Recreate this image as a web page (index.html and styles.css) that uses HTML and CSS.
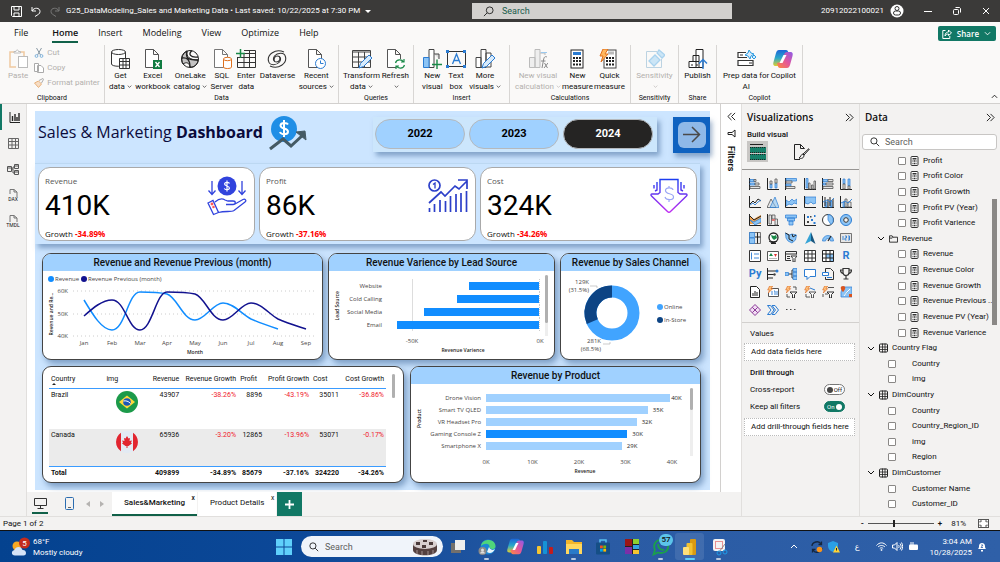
FILE: index.html
```html
<!doctype html>
<html lang="en">
<head>
    <meta charset="UTF-8">
    <meta name="viewport" content="width=device-width, initial-scale=1">
    <title>G25_DataModeling_Sales and Marketing Data</title>
    <link rel="stylesheet" href="styles.css">
</head>
<body>

<!-- shared icons -->
<svg class="sprite" width="0" height="0" aria-hidden="true">
    <symbol id="i-down" viewBox="0 0 8 5"><path d="M1 1l3 3 3-3" fill="none" stroke="currentColor"/></symbol>
    <symbol id="i-dbl" viewBox="0 0 10 10"><path d="M1 1l4 4-4 4M5 1l4 4-4 4" fill="none" stroke="currentColor"/></symbol>
    <symbol id="i-glass" viewBox="0 0 12 12"><circle cx="7.300" cy="4.700" r="3.700" fill="none" stroke="currentColor"/><path d="M4.500 7.500L1 11" fill="none" stroke="currentColor"/></symbol>
    <symbol id="i-calc" viewBox="0 0 8 10"><rect x=".5" y=".5" width="7" height="9" rx="1" fill="#fff" stroke="#333"/><rect x="2" y="2" width="4" height="1.500" fill="#333"/><path d="M2 5h4M2 7.500h4" stroke="#333" stroke-width="1.400" stroke-dasharray="1 .5"/></symbol>
    <symbol id="i-table" viewBox="0 0 9 9"><rect x=".5" y=".5" width="8" height="8" rx="1" fill="none" stroke="#222"/><path d="M0 3.500h9M0 6h9M3.500 0v9M6 0v9" stroke="#222" stroke-width=".8"/></symbol>
    <symbol id="i-folder" viewBox="0 0 10 8"><path d="M.5 7.500v-7h3l1 1.500h5v5.500zM.5 3h3l1-1" fill="none" stroke="#222"/></symbol>
    <symbol id="i-bolt" viewBox="0 0 8 8"><path d="M3 0h3.500L4.500 3h2L1.500 8l1.300-3.500H.8z" fill="#ffc27a" stroke="#d9661f" stroke-width=".7"/></symbol>
    <symbol id="i-copilot" viewBox="0 0 20 20">
        <path d="M6 1h7c1.500 0 2 1 2.500 3L16 6l-4 1-3 7c-.5 2-1.500 3-3 3H3c-3 0-3-2-2.500-4l2.500-9c.6-2 1.500-3 3-3z" fill="url(#cpA)"/>
        <path d="M14 19H7c-1.500 0-2-1-2.500-3L4 14l4-1 3-7c.5-2 1.500-3 3-3h3c3 0 3 2 2.500 4L17 16c-.6 2-1.500 3-3 3z" fill="url(#cpB)"/>
        <path d="M10.500 6h3L9.500 14h-3z" fill="#fff"/>
    </symbol>
    <linearGradient id="cpA" x1="0" y1="0" x2="0" y2="1"><stop offset="0" stop-color="#1c66d8"/><stop offset=".5" stop-color="#2aa8c9"/><stop offset="1" stop-color="#e0cf2f"/></linearGradient>
    <linearGradient id="cpB" x1="1" y1="0" x2="0" y2="1"><stop offset="0" stop-color="#8c5be8"/><stop offset=".5" stop-color="#e4569b"/><stop offset="1" stop-color="#ff8a3c"/></linearGradient>
    <linearGradient id="arrowG" x1="0" y1="0" x2="0" y2="1"><stop offset="0" stop-color="#1c3df0"/><stop offset="1" stop-color="#c02cf0"/></linearGradient>
</svg>

<header class="titlebar">
    <div class="title-left">
        <svg width="11" height="11" viewBox="0 0 11 11" fill="none" stroke="#fff"><path d="M.5.5h10v10h-9l-1-1zM3 .5v3.500h5V.5M3 10.500V7h5v3.500"/></svg>
        <svg width="10" height="11" viewBox="0 0 10 11" fill="none" stroke="#fff"><path d="M1 1v4h4M1 5c2-4 8-3.500 8 .5C9 8 7 8.500 4 10.500"/></svg>
        <svg width="10" height="11" viewBox="0 0 10 11" fill="none" stroke="#777"><path d="M9 1v4H5M9 5C7 1 1 1.500 1 5.500 1 8 3 8.500 6 10.500"/></svg>
        <span class="doc-name">G25_DataModeling_Sales and Marketing Data • Last saved: 10/22/2025 at 7:30 PM</span>
        <span class="caret"></span>
    </div>
    <label class="title-search">
        <svg width="11" height="11"><use href="#i-glass"/></svg>
        <input type="text" placeholder="Search" aria-label="Search">
    </label>
    <div class="title-right">
        <span class="account">20912022100021</span>
        <svg width="14" height="14" viewBox="0 0 14 14"><circle cx="7" cy="7" r="6.500" fill="#fff"/><circle cx="7" cy="4.500" r="2" fill="none" stroke="#333"/><rect x="3.500" y="7" width="7" height="4" rx="2" fill="none" stroke="#333"/></svg>
        <button class="win" aria-label="Minimize"><svg width="8" height="8" viewBox="0 0 8 8"><path d="M0 4.500h8" stroke="#fff"/></svg></button>
        <button class="win" aria-label="Restore"><svg width="8" height="8" viewBox="0 0 8 8" fill="none" stroke="#fff"><rect x=".5" y="2.500" width="5" height="5" rx="1"/><path d="M2.500.5h4l1 1v4"/></svg></button>
        <button class="win" aria-label="Close"><svg width="8" height="8" viewBox="0 0 8 8"><path d="M1 1l6 6M7 1L1 7" stroke="#fff"/></svg></button>
    </div>
</header>

<nav class="menu">
    <a href="#" class="file">File</a>
    <a href="#" class="active">Home</a>
    <a href="#">Insert</a>
    <a href="#">Modeling</a>
    <a href="#">View</a>
    <a href="#">Optimize</a>
    <a href="#">Help</a>
    <button class="share">
        <svg width="10" height="10" viewBox="0 0 10 10" fill="none" stroke="#fff"><path d="M3.500 1.500H.8v8h7V7M3 7c0-3 2-4 3.500-4V1L9.500 4l-3 2.500V5C5 5 4 5.500 3 7z"/></svg>
        Share
        <svg width="7" height="5"><use href="#i-down"/></svg>
    </button>
</nav>

<section class="ribbon">
    <div class="group g-clip">
        <div class="tools">
            <button class="tool off"><svg width="20" height="20" viewBox="0 0 20 20" fill="none"><path d="M8 18H2V3h14v4" stroke="#f0c9a0" stroke-width="1.500"/><path d="M6 4V2.500h2c0-2 2.500-2 2.500 0h2V4z" fill="#fff" stroke="#bbb"/><rect x="10.500" y="7.500" width="9" height="11" fill="#fff" stroke="#bbb"/></svg>Paste</button>
            <div class="clip-list">
                <button><svg width="10" height="10" viewBox="0 0 10 10" fill="none" stroke="#8a9aa5"><path d="M2.500 0l4 7M7.500 0l-4 7"/><circle cx="2.500" cy="8" r="1.400" stroke="#7fb2dc"/><circle cx="7.500" cy="8" r="1.400" stroke="#7fb2dc"/></svg>Cut</button>
                <button><svg width="10" height="10" viewBox="0 0 10 10" fill="#fff" stroke="#aaa"><path d="M.5.5h4v8h-4zM3.500 2.500h3.500l2.500 2.500v4.500h-6z"/></svg>Copy</button>
                <button><svg width="10" height="10" viewBox="0 0 10 10" fill="none"><path d="M.5 5l4-2 3 3-3 3.500z" fill="#f7ddc4" stroke="#e8b27c"/><path d="M5 2.500L9 .5l.5 1L7.500 5" stroke="#aaa"/></svg>Format painter</button>
            </div>
        </div>
        <h2>Clipboard</h2>
    </div>
    <div class="group g-data">
        <div class="tools">
            <button class="tool"><svg width="20" height="20" viewBox="0 0 20 20" fill="#fff" stroke="#333"><path d="M1.500 3v12c0 3 14 3 14 0V3"/><ellipse cx="8.500" cy="3" rx="7" ry="2.500"/><path d="M9.500 9.500h10v10h-10zM9.500 12.500h10M9.500 16h10M13 9.500v10M16 9.500v10"/></svg>Get<br>data<svg class="dd"><use href="#i-down"/></svg></button>
            <button class="tool"><svg width="20" height="20" viewBox="0 0 20 20" fill="#fff" stroke="#555"><path d="M2.500.5h8l5 5v13h-13zM10.500.5v5h5"/><path d="M10 11h9v9h-9z" fill="#107c41" stroke="none"/><path d="M12.500 13l4 5M16.500 13l-4 5" stroke="#fff" stroke-width="1.300"/></svg>Excel<br>workbook</button>
            <button class="tool"><svg width="20" height="20" viewBox="0 0 20 20" fill="none" stroke="#222"><circle cx="10" cy="10" r="8.500"/><path d="M7 2c-2 8 2 9 11 9M2 9c5-1 8 2 8 9M12 1.500C8 5 10 9 18 8" stroke-width="1.300"/><path d="M7 2C1 5 1 12 3 15c3-2 6-2 7 3 4 1 8-3 8-7-8 0-12-3-11-9z" fill="#222" fill-opacity=".25"/></svg>OneLake<br>catalog<svg class="dd"><use href="#i-down"/></svg></button>
            <button class="tool"><svg width="20" height="20" viewBox="0 0 20 20" fill="#fff" stroke="#777"><path d="M2.500.5h8l5 5v13h-13zM10.500.5v5h5"/><g stroke="#e0701c"><path d="M11.500 10v8c0 2 8 2 8 0v-8"/><ellipse cx="15.500" cy="10" rx="4" ry="1.700"/></g></svg>SQL<br>Server</button>
            <button class="tool"><svg width="20" height="20" viewBox="0 0 20 20" fill="none" stroke="#333"><path d="M8 1.500h11.500v17H1.500V8M1.500 8.500h18M1.500 13.500h18M8 5v13.500M13.500 1.500v17M8 4.500h11"/><path d="M0 4.500h9M4.500 0v9" stroke="#1a8a48" stroke-width="1.500"/></svg>Enter<br>data</button>
            <button class="tool"><svg width="20" height="20" viewBox="0 0 20 20" fill="none" stroke="#333" stroke-width="1.100"><path d="M17 3C8-1 0 6 1.500 12c1 5 8 4.500 11 1 2-3 1-6-2-6s-4 3-3 5"/><path d="M3 17c9 4 17-3 15.500-9-1-5-8-4.500-11-1-2 3-1 6 2 6s4-3 3-5"/></svg>Dataverse</button>
            <button class="tool"><svg width="20" height="20" viewBox="0 0 20 20" fill="#fff" stroke="#555"><path d="M2.500.5h8l5 5v13h-13zM10.500.5v5h5"/><circle cx="14.500" cy="14.500" r="5" stroke="#2b7cd3"/><path d="M14.500 11.500v3h3" stroke="#2b7cd3"/></svg>Recent<br>sources<svg class="dd"><use href="#i-down"/></svg></button>
        </div>
        <h2>Data</h2>
    </div>
    <div class="group g-query">
        <div class="tools">
            <button class="tool"><svg width="20" height="20" viewBox="0 0 20 20" fill="none" stroke="#444"><path d="M.5 1.500h18v17H.5zM.5 3h18M.5 8h18M.5 13h18M6.500 3v15M12.500 3v15"/><path d="M7 19l1.500-4.500L17 6l3 3-8.500 8.500z" fill="#d8ebfb" stroke="#2b7cd3"/></svg>Transform<br>data<svg class="dd"><use href="#i-down"/></svg></button>
            <button class="tool"><svg width="20" height="20" viewBox="0 0 20 20" fill="#fff" stroke="#555"><path d="M2.500.5h8l5 5v13h-13zM10.500.5v5h5"/><circle cx="15" cy="15" r="5" stroke="none"/><path d="M10.500 14c1-4 6.500-4 8-1M19 10v3h-3M19.500 16c-1 4-6.500 4-8 1M11 20v-3h3" fill="none" stroke="#1a8a48" stroke-width="1.200"/></svg>Refresh<br><svg class="dd"><use href="#i-down"/></svg></button>
        </div>
        <h2>Queries</h2>
    </div>
    <div class="group g-insert">
        <div class="tools">
            <button class="tool"><svg width="20" height="20" viewBox="0 0 20 20" fill="#fff" stroke="#444"><path d="M7 .5h5v18H7z"/><path d="M1.500 8.500H7v10H1.500z" fill="#8cc4f5" stroke="#2b7cd3"/><path d="M12 5h5v5" fill="#ddd"/><path d="M10 15.500h10M15 10.500v10" stroke="#1a8a48" stroke-width="1.400"/></svg>New<br>visual</button>
            <button class="tool"><svg width="20" height="20" viewBox="0 0 20 20" fill="none"><path d="M1.500 2.500h18v15h-18z" stroke="#333"/><path d="M0 1h3v3H0zM17 1h3v3h-3zM0 16h3v3H0zM17 16h3v3h-3z" fill="#2b7cd3"/><path d="M6.500 15l4-10 4 10M8 11.500h5" stroke="#2b7cd3" stroke-width="1.300"/></svg>Text<br>box</button>
            <button class="tool"><svg width="20" height="20" viewBox="0 0 20 20" fill="#fff" stroke="#444"><path d="M6 .5h5v18H6zM1 8.500h5v10H1zM11 4h5v14h-5z"/><path d="M7 19l1.500-4.500L17 6l3 3-8.500 8.500z" fill="#d8ebfb" stroke="#2b7cd3"/></svg>More<br>visuals<svg class="dd"><use href="#i-down"/></svg></button>
        </div>
        <h2>Insert</h2>
    </div>
    <div class="group g-calc">
        <div class="tools">
            <button class="tool off"><svg width="20" height="20" viewBox="0 0 20 20" fill="#eee" stroke="#bbb"><path d="M7 .5h5v18H7zM1.500 8.500H7v10H1.500zM12 4h5v2"/><path d="M19 8c-2-1-3 0-3.500 3L14 19M13 12h4.500M16.500 14l3 5M20 14l-4 5" fill="none" stroke="#888"/><path d="M13 3.500h6" stroke="#9bc9ee"/></svg>New visual<br>calculation<svg class="dd"><use href="#i-down"/></svg></button>
            <button class="tool"><svg width="20" height="20" viewBox="0 0 20 20"><rect x="4" y="1" width="12" height="18" fill="#fff" stroke="#222"/><rect x="6" y="3" width="8" height="3" fill="#2b7cd3"/><path d="M6 9h8M6 12h8M6 15.500h8" stroke="#222" stroke-width="1.800" stroke-dasharray="2 1"/></svg>New<br>measure</button>
            <button class="tool"><svg width="20" height="20" viewBox="0 0 20 20"><rect x="5" y="1" width="12" height="18" fill="#fff" stroke="#444"/><path d="M9 4h6" stroke="#bbb" stroke-width="3"/><path d="M7 9h8M7 12h8M7 15.500h8" stroke="#222" stroke-width="1.800" stroke-dasharray="2 1"/><path d="M4 0h5L6 5h3l-7 8 2-6H1z" fill="#ffb75e" stroke="#e0701c"/></svg>Quick<br>measure</button>
        </div>
        <h2>Calculations</h2>
    </div>
    <div class="group g-sens">
        <div class="tools">
            <button class="tool off"><svg width="20" height="20" viewBox="0 0 20 20" fill="none" stroke="#a9d2ee"><path d="M12 2.500H1.500v16h15V10" stroke="#bcd3e2"/><path d="M4 12l6-6 5 5-6 6zM12 4l2-3 6 5-3 3z" fill="#cbe5f6" stroke-width="1.300"/></svg>Sensitivity<br><svg class="dd"><use href="#i-down"/></svg></button>
        </div>
        <h2>Sensitivity</h2>
    </div>
    <div class="group g-share">
        <div class="tools">
            <button class="tool"><svg width="20" height="20" viewBox="0 0 20 20" fill="#fff" stroke="#222"><path d="M8 .5h7v18H8zM5 6.500h6v6H5zM1 12.500h10v6H1zM3 16h2M8 16h2"/><path d="M15 20v-9M11 14.500l4-4 4 4" fill="none" stroke="#2b7cd3" stroke-width="1.400"/></svg>Publish</button>
        </div>
        <h2>Share</h2>
    </div>
    <div class="group g-copilot">
        <div class="tools">
            <button class="tool"><svg width="20" height="20" viewBox="0 0 20 20" fill="#fff" stroke="#333" stroke-width="1.200"><path d="M10 3.500H2v5h9M2 11.500h15v5H2z"/><path d="M4 6h3M13 14h3"/><path d="M13 1l2 3 3 1-3 2-1 3-2-3-3-1 3-2zM18 6l2 2-2 2-2-2z" fill="#d8ebfb" stroke="#2b9be0" stroke-width="1"/></svg>Prep data for<br>AI</button>
            <button class="tool"><svg width="20" height="20"><use href="#i-copilot"/></svg>Copilot</button>
        </div>
        <h2>Copilot</h2>
    </div>
    <button class="collapse" aria-label="Collapse ribbon"><svg width="7" height="5"><use href="#i-down"/></svg></button>
</section>

<main class="work">
    <nav class="rail">
        <button class="active" aria-label="Report view"><svg width="11" height="11" viewBox="0 0 11 11"><path d="M1 0v10.500h10" fill="none" stroke="#222"/><path d="M3.500 4v5M6 2v7M8 5v4M10 1v8" stroke="#222" stroke-width="1.400"/></svg></button>
        <button aria-label="Table view"><svg width="11" height="11" viewBox="0 0 11 11" fill="none" stroke="#666"><path d="M.5.500h10v10H.5zM.5 3.500h10M.5 7h10M4 .5v10M7.500.5v10"/></svg></button>
        <button aria-label="Model view"><svg width="12" height="11" viewBox="0 0 12 11" fill="none" stroke="#555"><path d="M.5 2.500h4v5h-4zM7.500.500h4v4h-4zM7.500 6.500h4v4h-4zM.5 4h4M7.500 2h4M7.500 8h4M4.500 5h1.500v4h1.500M6 5V3h1.500"/></svg></button>
        <button aria-label="DAX query view"><svg width="12" height="8" viewBox="0 0 12 8" fill="none" stroke="#777"><path d="M3 5V.5h4L10 3v5M7 .5V3h3"/></svg><small>DAX</small></button>
        <button aria-label="TMDL view"><svg width="12" height="8" viewBox="0 0 12 8" fill="none" stroke="#777"><path d="M3 7V.5h4L10 3v4M7 .5V3h3"/></svg><small>TMDL</small></button>
    </nav>

    <div class="center">
        <div class="stage">
            <div class="canvas">
                <div class="page">
                    <div class="page-head">
                        <h1>Sales &amp; Marketing <b>Dashboard</b></h1>
                        <svg class="logo" width="38" height="37" viewBox="0 0 38 37">
                            <circle cx="15" cy="14" r="13" fill="#1f8ee6"/>
                            <path d="M19 9.500c-1-2-7-2.500-7.500.8-.3 3.800 7.700 2.700 7.500 6.500-.3 3.300-7 3-8 .2M15 5v17" fill="none" stroke="#fff" stroke-width="2"/>
                            <path d="M1 34l13-10 8 7L34 20" fill="none" stroke="#455a64" stroke-width="3"/>
                            <path d="M27 17l9-1 1 9z" fill="#455a64" stroke="#455a64"/>
                        </svg>
                        <div class="years">
                            <button>2022</button>
                            <button>2023</button>
                            <button class="on">2024</button>
                        </div>
                        <button class="next" aria-label="Next page"><span><svg width="18" height="17" viewBox="0 0 18 17" fill="none" stroke="#4a4a4a" stroke-width="1.500"><path d="M0 8.500h16M9 1l7.500 7.500L9 16"/></svg></span></button>
                    </div>

                    <div class="cards">
                        <article class="card">
                            <div>
                                <h3>Revenue</h3>
                                <p class="big">410K</p>
                                <p class="growth">Growth <b>-34.89%</b></p>
                            </div>
                            <svg width="40" height="40" viewBox="0 0 40 40" fill="none" stroke="#3143dd" stroke-width="1.300">
                                <circle cx="20" cy="10" r="9.500" fill="#3143dd" stroke="none"/>
                                <path d="M22.500 7.500c-.5-1.500-4.500-1.500-5 .3-.3 2.500 5 1.900 5 4.400-.3 2-4.500 2-5.200.2M20 4.500v11" stroke="#fff" stroke-width="1.200"/>
                                <path d="M5 5v13M1.500 14.500L5 18.500l3.500-4M35 5v13M31.500 14.500l3.500 4 3.500-4"/>
                                <path d="M1 27l5-2.500 5.500 12-5 2zM8 26c4-3.500 7-4 10-2l3 1h5c3 0 3 3.500 0 3.500h-7M28 28l8-4.500c2-1 4 1 2 2.500l-11 8.500c-3 2-9 0-15.500 2"/>
                                <circle cx="5" cy="28" r=".8" stroke="#f55"/><circle cx="6.500" cy="31" r=".6" stroke="#f55"/>
                            </svg>
                        </article>
                        <article class="card">
                            <div>
                                <h3>Profit</h3>
                                <p class="big">86K</p>
                                <p class="growth">Growth <b>-37.16%</b></p>
                            </div>
                            <svg width="40" height="40" viewBox="0 0 40 40" fill="none" stroke="#2c3fc9" stroke-width="1.700">
                                <circle cx="6.500" cy="9.500" r="5.500"/><path d="M5 8.500l2-1.500v5.500" stroke-width="1.300"/>
                                <path d="M1 27l12-11 4 4 10-10 4 3 8-8M30 4h9v9"/>
                                <path d="M1.500 36v-4M6.500 36v-8M12 36V24M17.500 36V25M22.500 36V20M28 36V18M33 36V17M38.500 36V15"/>
                            </svg>
                        </article>
                        <article class="card">
                            <div>
                                <h3>Cost</h3>
                                <p class="big">324K</p>
                                <p class="growth">Growth <b>-34.26%</b></p>
                            </div>
                            <svg width="40" height="40" viewBox="0 0 40 40" fill="none" stroke="url(#arrowG)" stroke-width="1.400">
                                <path d="M11 3.500h18v13l2 1.500h6c1 0 1.500 1 .5 2L21.500 35.500c-1 1-2 1-3 0L2.500 20c-1-1-.5-2 .5-2h6l2-1.500zM8 6v8l-2 1M5 9v3.500M32 6v8l2 1M35 9v3.500"/>
                                <path d="M24 14c-.5-3-7.500-3-7.500.5 0 4.500 8 2 8 6.500 0 3.500-7.500 3.500-8.500 0M20 10v2M20 24v2" stroke="#9aa5f5" stroke-width="1.200"/>
                            </svg>
                        </article>
                    </div>

                    <div class="row row-a">
                        <section class="panel">
                            <h2>Revenue and Revenue Previous (month)</h2>
                            <svg class="chart" viewBox="0 0 279 89">
                                <circle cx="8" cy="8" r="3" fill="#118dff"/><text x="12" y="10">Revenue</text>
                                <circle cx="41" cy="8" r="3" fill="#12128f"/><text x="45" y="10">Revenue Previous (month)</text>
                                <path class="dots" d="M30 20h243M30 43h243M30 65h243"/>
                                <g text-anchor="end"><text x="25" y="22">60K</text><text x="25" y="45">50K</text><text x="25" y="67">40K</text></g>
                                <g text-anchor="middle">
                                    <text x="41" y="74">Jan</text><text x="69" y="74">Feb</text><text x="97" y="74">Mar</text><text x="124" y="74">Apr</text><text x="152" y="74">May</text><text x="180" y="74">Jun</text><text x="208" y="74">Jul</text><text x="235" y="74">Aug</text><text x="263" y="74">Sep</text>
                                    <text class="name" x="152" y="83">Month</text>
                                    <text class="name" transform="translate(10 43) rotate(-90)">Revenue and Re...</text>
                                </g>
                                <path d="M41 29C50 44 59 59 69 59 82 59 85 21 97 21 106 21 115 21 124 23 134 26 140 49 152 49 162 49 170 32 180 32 190 32 199 43 208 48 217 52 226 55 235 58" fill="none" stroke="#118dff" stroke-width="1.500"/>
                                <path d="M41 45C50 37 59 29 69 29 82 29 85 59 97 59 109 59 113 21 124 21 133 21 143 21 152 23 162 26 168 49 180 49 190 49 198 32 208 32 218 32 226 43 235 48 244 52 254 55 263 58" fill="none" stroke="#12128f" stroke-width="1.500"/>
                            </svg>
                        </section>

                        <section class="panel">
                            <h2>Revenue Varience by Lead Source</h2>
                            <div class="bars lead">
                                <div class="vname"><span>Lead Source</span></div>
                                <div class="plot">
                                    <div class="bar-row"><span>Website</span><div class="track"><i style="width:47%"></i></div></div>
                                    <div class="bar-row"><span>Cold Calling</span><div class="track"><i style="width:55%"></i></div></div>
                                    <div class="bar-row"><span>Social Media</span><div class="track"><i style="width:77%"></i></div></div>
                                    <div class="bar-row"><span>Email</span><div class="track"><i style="width:95%"></i></div></div>
                                    <div class="ticks"><span>-50K</span><span>0K</span></div>
                                    <div class="axis-name">Revenue Varience</div>
                                </div>
                                <div class="scroll"><div class="thumb"></div></div>
                            </div>
                        </section>

                        <section class="panel">
                            <h2>Revenue by Sales Channel</h2>
                            <svg class="chart" viewBox="0 0 139 89">
                                <circle cx="51" cy="42" r="21.500" fill="none" stroke="#41a4ff" stroke-width="12"/>
                                <path d="M51 42m0 -21.500a21.500 21.500 0 0 0 -19.700 30.100" fill="none" stroke="#0d4484" stroke-width="12"/>
                                <path d="M29 15h7v2M49 71v2h-7" fill="none" stroke="#aaa" stroke-width=".6"/>
                                <g text-anchor="end"><text x="28" y="13">129K</text><text x="28" y="21">(31.5%)</text><text x="40" y="72">281K</text><text x="40" y="80">(68.5%)</text></g>
                                <circle cx="99" cy="36" r="3" fill="#41a4ff"/><text x="103" y="38">Online</text>
                                <circle cx="99" cy="49" r="3" fill="#0d4484"/><text x="103" y="51">In-Store</text>
                            </svg>
                        </section>
                    </div>

                    <div class="row row-b">
                        <section class="panel table-panel">
                            <table>
                                <thead>
                                    <tr><th class="l c1">Country<i class="sort"></i></th><th class="l c2">img</th><th class="c3">Revenue</th><th class="c4">Revenue Growth</th><th class="l c5">Profit</th><th class="c6">Profit Growth</th><th class="l c7">Cost</th><th class="c8">Cost Growth</th></tr>
                                </thead>
                                <tbody>
                                    <tr>
                                        <td class="l">Brazil</td>
                                        <td class="flag"><svg width="22" height="22" viewBox="0 0 22 22"><circle cx="11" cy="11" r="11" fill="#1c9a4a"/><path d="M11 4.500L19 11l-8 6.500L3 11z" fill="#ffd83b"/><circle cx="11" cy="11" r="3.800" fill="#1b56b8"/><path d="M7.500 10c2-.5 5 0 7 2.500" stroke="#fff" fill="none"/></svg></td>
                                        <td>43907</td><td class="neg">-38.26%</td><td>8896</td><td class="neg">-43.19%</td><td>35011</td><td class="neg">-36.86%</td>
                                    </tr>
                                    <tr>
                                        <td class="l">Canada</td>
                                        <td class="flag"><svg width="22" height="22" viewBox="0 0 22 22"><circle cx="11" cy="11" r="11" fill="#e3eaf3"/><path d="M5 1.800v18.400a11 11 0 0 1 0-18.400zM17 1.800v18.400a11 11 0 0 0 0-18.400zM11 5l1.500 2.500L14 7l-.5 3 2.500-.5-1 2 1 1-3.500 2.500h-1v2h-1v-2h-1L6 12.500l1-1-1-2 2.500.5L8 7l1.500.5z" fill="#e2252f"/></svg></td>
                                        <td>65936</td><td class="neg">-3.20%</td><td>12865</td><td class="neg">-13.96%</td><td>53071</td><td class="neg">-0.17%</td>
                                    </tr>
                                </tbody>
                                <tfoot>
                                    <tr><td class="l">Total</td><td></td><td>409899</td><td>-34.89%</td><td>85679</td><td>-37.16%</td><td>324220</td><td>-34.26%</td></tr>
                                </tfoot>
                            </table>
                            <div class="scroll"><div class="thumb"></div></div>
                        </section>

                        <section class="panel">
                            <h2>Revenue by Product</h2>
                            <div class="bars product">
                                <div class="vname"><span>Product</span></div>
                                <div class="plot">
                                    <div class="bar-row"><span>Drone Vision</span><div class="track"><i style="width:99%"></i><em class="tight">40K</em></div></div>
                                    <div class="bar-row"><span>Smart TV QLED</span><div class="track"><i style="width:87%"></i><em>35K</em></div></div>
                                    <div class="bar-row"><span>VR Headset Pro</span><div class="track"><i style="width:81%"></i><em>32K</em></div></div>
                                    <div class="bar-row hot"><span>Gaming Console Z</span><div class="track"><i style="width:76%"></i><em>30K</em></div></div>
                                    <div class="bar-row"><span>Smartphone X</span><div class="track"><i style="width:73%"></i><em>29K</em></div></div>
                                    <div class="ticks"><span>0K</span><span>10K</span><span>20K</span><span>30K</span><span>40K</span></div>
                                    <div class="axis-name">Revenue</div>
                                </div>
                                <div class="scroll"><div class="thumb"></div></div>
                            </div>
                        </section>
                    </div>
                </div>
            </div>

            <aside class="filters">
                <button class="flip" aria-label="Expand filters"><svg width="9" height="9"><use href="#i-dbl"/></svg></button>
                <svg width="9" height="9" viewBox="0 0 9 9"><path d="M8 1v7L5 5.500H1v-2h4z" fill="none" stroke="#222"/></svg>
                <span>Filters</span>
            </aside>
        </div>

        <footer class="sheets">
            <button class="layout on" aria-label="Desktop layout"><svg width="13" height="11" viewBox="0 0 13 11" fill="none" stroke="#333"><path d="M.5.5h12v7H.5zM6.500 8v2M3.500 10.500h6"/></svg></button>
            <button class="layout" aria-label="Mobile layout"><svg width="9" height="13" viewBox="0 0 9 13" fill="none"><rect x=".5" y=".5" width="8" height="12" rx="1" stroke="#2b6cb0"/><path d="M3 10.500h3" stroke="#666"/></svg></button>
            <button class="step" aria-label="Previous page"><svg width="4" height="6" viewBox="0 0 4 6"><path d="M4 0v6L0 3z" fill="#b5b3b1"/></svg></button>
            <button class="step" aria-label="Next page"><svg width="4" height="6" viewBox="0 0 4 6"><path d="M0 0v6l4-3z" fill="#b5b3b1"/></svg></button>
            <button class="sheet current">Sales&amp;Marketing<sup>x</sup></button>
            <button class="sheet">Product Details<sup>x</sup></button>
            <button class="add" aria-label="New page"><svg width="9" height="9" viewBox="0 0 9 9"><path d="M0 4.500h9M4.500 0v9" stroke="#fff" stroke-width="1.800"/></svg></button>
        </footer>
    </div>

    <aside class="viz">
        <div class="pane-head"><h2>Visualizations</h2><svg width="9" height="9"><use href="#i-dbl"/></svg></div>
        <h3 class="build">Build visual</h3>
        <div class="modes">
            <button class="on" aria-label="Build visual"><svg width="16" height="16" viewBox="0 0 16 16"><path d="M0 .500h13" stroke="#222"/><rect y="3" width="16" height="6" fill="#17806a"/><rect y="10" width="16" height="6" fill="#17806a"/><path d="M0 3.500h16M0 8.500h16M0 10.500h16M0 15.500h16" stroke="#222" stroke-dasharray="1 1"/></svg></button>
            <button aria-label="Format page"><svg width="16" height="16" viewBox="0 0 16 16" fill="none" stroke="#222"><path d="M6 15.500H.5V.5h6l4 4M6.500.5v4h4"/><path d="M15.500 5L10 11l-1-1 6-5.500M9 10c-2 0-2 3-4 4 2 1 5 .5 5-3"/></svg></button>
        </div>
        <div class="gallery">
            <button><svg viewBox="0 0 12 12"><path class="ax" d="M.5 0v12"/><path class="b" d="M1 1.500h4v2H1zM1 5h5v2H1z"/><path class="k" d="M5 1.500h2v2H5zM6 5h4v2H6zM1 8.500h10v2H1z"/></svg></button>
            <button><svg viewBox="0 0 12 12"><path class="ax" d="M.5 0v11.500H12"/><path class="b" d="M3 6h2v4H3zM8 5h2v5H8z"/><path class="k" d="M3 3h2v3H3zM8 1h2v4H8z"/></svg></button>
            <button><svg viewBox="0 0 12 12"><path class="ax" d="M.5 0v12"/><path class="b" d="M1 .5h10.500v2.500H1zM1 6h5v2H1z"/><path class="k" d="M1 3h6v2H1zM1 8.500h9v2H1z"/></svg></button>
            <button><svg viewBox="0 0 12 12"><path class="ax" d="M.5 0v11.500H12"/><path class="b" d="M2 .5h2v9.500H2z"/><path class="k" d="M4.500 5h1.500v6H4.500zM7.500 7h1.500v4H7.500zM10 3h1.500v8H10z"/></svg></button>
            <button><svg viewBox="0 0 12 12"><path class="ax" d="M.5 0v12"/><path class="b" d="M1 1.500h5v2H1zM1 5h3v2H1z"/><path class="k" d="M6 1.500h5v2H6zM4 5h7v2H4zM1 8.500h10v2H1z"/></svg></button>
            <button><svg viewBox="0 0 12 12"><path class="ax" d="M.5 0v11.500H12"/><path class="b" d="M3 1h2v5H3zM8 1h2v7H8z"/><path class="k" d="M3 6h2v5H3zM8 8h2v3H8z"/></svg></button>

            <button><svg viewBox="0 0 12 12"><path class="ax" d="M.5 0v11.500H12M1 8l3-3 2 2 3-4 3 2"/><path class="bl" d="M1 9l3-2 2 2 3-3 3-2"/></svg></button>
            <button><svg viewBox="0 0 12 12"><path class="k" d="M0 11.500L4 3l5 8.500z"/><path class="b" d="M3 11.500L8 1l4 10.500z" fill-opacity=".6"/></svg></button>
            <button><svg viewBox="0 0 12 12"><path class="b" d="M1 4l3 2 3-3 2 2 3-2v5l-3-1-2 2-3-1-3 2z"/><path class="ax" d="M.5 0v11.500H12"/></svg></button>
            <button><svg viewBox="0 0 12 12"><path class="b" d="M1 1h11v6L9 8 7 6 4 8 1 7z"/><path class="ax" d="M.5 0v11.500H12"/></svg></button>
            <button><svg viewBox="0 0 12 12"><path class="ax" d="M.5 0v11.500H12"/><path class="b" d="M3 6h2v5H3zM8 5h2v6H8z"/><path class="ax" d="M3 1v9M6 3v8M8 1v9M11 3v8"/><path class="bl" d="M1 6l4-2 3 2 4-4"/></svg></button>
            <button><svg viewBox="0 0 12 12"><path class="ax" d="M.5 0v11.500H12"/><path class="b" d="M3 6h2v5H3z"/><path class="k" d="M5 3h2v8H5zM8 6h3v5H8z"/><path class="bl" d="M1 7l4-2 3 2 4-4"/></svg></button>

            <button><svg viewBox="0 0 12 12"><path d="M1 2l4 3 3-2 4-2v9H1z" fill="#f3a34e"/><path class="b" d="M1 6l4 2 7-4v4l-6 3z"/><path class="ax" d="M.5 0v11.500H12M1 2l4 4 7-4"/></svg></button>
            <button><svg viewBox="0 0 12 12"><path class="ax" d="M.5 0v11.500H12"/><path class="k" d="M2 1h2.500v9H2zM5 1h3v4H5zM8 5h2.500v6H8z"/><path d="M5 5h3v2H5z" fill="#d77"/></svg></button>
            <button><svg viewBox="0 0 12 12"><path class="b" d="M.5 1h11v3H.5zM2.500 4h7v3h-7zM4 7h4v4H4z"/></svg></button>
            <button><svg viewBox="0 0 12 12"><path class="ax" d="M.5 0v11.500H12"/><path d="M3 2h2v2H3zM7 5h2v2H7zM10 1h1.500v2H10zM9.500 8h2v2h-2z" fill="#2b7cd3"/><path d="M3 7h2v2H3zM6 2h1.500v1.500H6z" fill="#444"/></svg></button>
            <button><svg viewBox="0 0 12 12"><circle cx="6" cy="6" r="5.500" fill="#fff" stroke="#333"/><path class="b" d="M6 .5A5.500 5.500 0 0 1 9 10.500L6 6z"/></svg></button>
            <button><svg viewBox="0 0 12 12"><circle cx="6" cy="6" r="4" fill="none" stroke="#8cc4f5" stroke-width="3"/><circle cx="6" cy="6" r="5.500" fill="none" stroke="#2b7cd3"/><circle cx="6" cy="6" r="2.300" fill="none" stroke="#333"/></svg></button>

            <button><svg viewBox="0 0 12 12"><path class="k" d="M.5.5h11v11H.5z"/><path class="b" d="M.5.5h5v5h-5zM.5 6h5v5.500h-5z"/><path class="ax" d="M8.500.5v11M6 5h5.500"/></svg></button>
            <button><svg viewBox="0 0 12 12"><circle cx="6.500" cy="5.500" r="4.500" fill="#fff" stroke="#222" stroke-width="1.300"/><path d="M4 3l3 1 2-1 1 3-3 2-2-2z" fill="#1a8a48"/><path class="ax" d="M2 9c2 2 6 2 8 0M6.500 10v2M4 11.500h5"/></svg></button>
            <button><svg viewBox="0 0 12 12"><path class="b" d="M.5 1L4 3l3-1 4.500 1-1 5L7 11 3 9 1 6z"/><path class="ax" d="M.5 1L4 3v4l4 2M7 2l1 3 3-2"/></svg></button>
            <button><svg viewBox="0 0 12 12"><path d="M7 0l4.500 12L7 9z" fill="#17557f"/><path d="M7 0L1 12l6-3z" fill="#35a3d6"/></svg></button>
            <button><svg viewBox="0 0 12 12"><path class="b" d="M.5 9a5.500 5.500 0 0 1 11 0H8.500a2.500 2.500 0 0 0-5 0z"/><path d="M6 9l3-5" stroke="#222" stroke-width="1.200"/></svg></button>
            <button><svg viewBox="0 0 12 12"><path class="k" d="M.5 1.500h11v9H.5z"/><path class="bl" d="M3 4v4M5 4h1.500v2H5v2h1.500M8 4h1.500v4H8M8 6h1.500"/></svg></button>

            <button><svg viewBox="0 0 12 12"><path d="M.5.500h11v11H.5z" fill="#fff" stroke="#333"/><path class="bl" d="M5 4h5M5 8h5M2.500 2.500v7"/></svg></button>
            <button><svg viewBox="0 0 12 12"><path d="M.5 1.500h11v9H.5z" fill="#fff" stroke="#555"/><path d="M2 6l2-3 2 3z" fill="#1a8a48"/><path d="M7 4l1.500 3L10 4z" fill="#d33"/><path d="M2 8.500h8" stroke="#bbb"/></svg></button>
            <button><svg viewBox="0 0 12 12"><path d="M.5 1.500h11v3M.5 1.500v9H6M.5 4h11M2 6.500h3M2 8.500h3" fill="none" stroke="#333"/><path d="M6 6h6L10 8.500V12H8V8.500z" fill="#fff" stroke="#333"/></svg></button>
            <button><svg viewBox="0 0 12 12"><path d="M.5.500h11v11H.5zM.5 4h11M.5 8h11M4 .5v11M8 .5v11" fill="#fff" stroke="#333"/></svg></button>
            <button><svg viewBox="0 0 12 12"><path d="M.5.500h11v11H.5z" fill="#fff"/><path d="M4 4h4v4H4zM8 4h4v8H8z" fill="#8cc4f5"/><path d="M.5.500h11v11H.5zM.5 4h11M.5 8h11M4 .5v11M8 .5v11" fill="none" stroke="#222"/></svg></button>
            <button class="txt">R</button>

            <button class="txt">Py</button>
            <button><svg viewBox="0 0 12 12"><path class="ax" d="M.5 0v12M1 3h8M1 6.500h6M1 10h5"/><circle cx="10" cy="3" r="1.500" fill="#2b7cd3"/><circle cx="7.500" cy="6.500" r="1.200" fill="#444"/></svg></button>
            <button><svg viewBox="0 0 12 12"><path d="M3 6h4M7 2v8M7 2h1M7 10h1" stroke="#333"/><path class="b" d="M0 4.500h3.500v3H0zM8 .5h4v3H8zM8 4.500h4v3H8zM8 8.500h4v3H8z"/></svg></button>
            <button><svg viewBox="0 0 12 12"><path d="M.5 1.500h11v7H6L3 11.500v-3H.5z" fill="#fff" stroke="#2b7cd3"/></svg></button>
            <button><svg viewBox="0 0 12 12"><path d="M3.500 4V.5h5l3 3v8h-8V9" fill="none" stroke="#333"/><path d="M.5 4.500h6v3h-6zM5 9.500h5" fill="#fff" stroke="#2b7cd3"/></svg></button>
            <button><svg viewBox="0 0 12 12"><path d="M3 .5h6v4c0 4-6 4-6 0zM3 2H.5c0 3 1 3.500 3 4M9 2h2.500c0 3-1 3.500-3 4M6 7.500v3M3.500 11h5" fill="none" stroke="#333" stroke-width="1.200"/></svg></button>

            <button><svg viewBox="0 0 12 12"><path d="M1.500.5h6l3 3v8h-9z" fill="#fff" stroke="#222"/><path class="ax" d="M4 10V7M6 10V5M8 10V6"/></svg></button>
            <button><svg viewBox="0 0 12 12"><path d="M2 2.500h9.500v8H1.500V7" fill="#fff" stroke="#555"/><path class="bl" d="M5 5v4M7 5h1v4M10 5v4"/><use href="#i-bolt" width="7" height="7"/></svg></button>
            <button><svg viewBox="0 0 12 12"><path d="M8 1h3v3M2 8v3h3" fill="none" stroke="#555"/><path d="M5 6h7l-2.500 2.500V12h-2V8.500z" fill="#fff" stroke="#333"/><use href="#i-bolt" width="7" height="7"/></svg></button>
            <button><svg viewBox="0 0 12 12"><path d="M6 2l5 2" stroke="#2b7cd3"/><path d="M5 6h7l-2.500 2.500V12h-2V8.500zM2 8v3h4" fill="#fff" stroke="#555"/><use href="#i-bolt" width="7" height="7"/></svg></button>
            <button><svg viewBox="0 0 12 12"><path d="M6 1.500h6M1 8v3M3 8h3" stroke="#555"/><path d="M5 6h7l-2.500 2.500V12h-2V8.500z" fill="#fff" stroke="#333"/><use href="#i-bolt" width="7" height="7"/></svg></button>
            <button><svg viewBox="0 0 12 12"><path class="b" d="M3 1h9v10H1V6z"/><path d="M3 0c3 0 3 3 0 6C0 3 0 0 3 0zM9 8h3v3H9z" fill="#d9541f"/><path d="M4 10l3-4 3-3" stroke="#fff"/></svg></button>

            <button><svg viewBox="0 0 12 12" fill="#f1dcf3" stroke="#8a3a97"><path d="M6 .5L11.500 6 6 11.500.5 6zM3.300 3.300l5.400 5.400M8.700 3.300L3.300 8.700"/></svg></button>
            <button><svg viewBox="0 0 12 12" fill="none" stroke="#2b7cd3"><path d="M.5 1.500h3L7 6l-3.500 4.500h-3L4 6zM5 1.500h3L11.500 6 8 10.500H5L8.500 6z"/></svg></button>
            <button><svg viewBox="0 0 12 12"><path d="M1 5.500h10" stroke="#444" stroke-width="1.200" stroke-dasharray="1.500 2.500"/></svg></button>
        </div>
        <div class="wells">
            <h4>Values</h4>
            <div class="well">Add data fields here</div>
            <h4 class="drill">Drill through</h4>
            <label class="switch">Cross-report<input type="checkbox"><span></span></label>
            <label class="switch">Keep all filters<input type="checkbox" checked><span></span></label>
            <div class="well">Add drill-through fields here</div>
        </div>
    </aside>

    <aside class="data">
        <div class="pane-head"><h2>Data</h2><svg width="9" height="9"><use href="#i-dbl"/></svg></div>
        <label class="find"><svg class="mirror" width="10" height="10"><use href="#i-glass"/></svg><input type="text" placeholder="Search" aria-label="Search fields"></label>
        <div class="tree">
            <label class="m"><input type="checkbox"><svg><use href="#i-calc"/></svg>Profit</label>
            <label class="m"><input type="checkbox"><svg><use href="#i-calc"/></svg>Profit Color</label>
            <label class="m"><input type="checkbox"><svg><use href="#i-calc"/></svg>Profit Growth</label>
            <label class="m"><input type="checkbox"><svg><use href="#i-calc"/></svg>Profit PV (Year)</label>
            <label class="m"><input type="checkbox"><svg><use href="#i-calc"/></svg>Profit Varience</label>
            <div class="f"><svg class="chev"><use href="#i-down"/></svg><svg><use href="#i-folder"/></svg>Revenue</div>
            <label class="m"><input type="checkbox"><svg><use href="#i-calc"/></svg>Revenue</label>
            <label class="m"><input type="checkbox"><svg><use href="#i-calc"/></svg>Revenue Color</label>
            <label class="m"><input type="checkbox"><svg><use href="#i-calc"/></svg>Revenue Growth</label>
            <label class="m"><input type="checkbox"><svg><use href="#i-calc"/></svg>Revenue Previous ...</label>
            <label class="m"><input type="checkbox"><svg><use href="#i-calc"/></svg>Revenue PV (Year)</label>
            <label class="m"><input type="checkbox"><svg><use href="#i-calc"/></svg>Revenue Varience</label>
            <div class="t"><svg class="chev"><use href="#i-down"/></svg><svg><use href="#i-table"/></svg>Country Flag</div>
            <label class="c"><input type="checkbox">Country</label>
            <label class="c"><input type="checkbox">img</label>
            <div class="t"><svg class="chev"><use href="#i-down"/></svg><svg><use href="#i-table"/></svg>DimCountry</div>
            <label class="c"><input type="checkbox">Country</label>
            <label class="c"><input type="checkbox">Country_Region_ID</label>
            <label class="c"><input type="checkbox">img</label>
            <label class="c"><input type="checkbox">Region</label>
            <div class="t"><svg class="chev"><use href="#i-down"/></svg><svg><use href="#i-table"/></svg>DimCustomer</div>
            <label class="c"><input type="checkbox">Customer Name</label>
            <label class="c"><input type="checkbox">Customer_ID</label>
            <div class="tree-bar"></div>
        </div>
    </aside>
</main>

<div class="status">
    <span>Page 1 of 2</span>
    <div class="zoom">
        <b>-</b><input type="range" min="10" max="180" value="76" aria-label="Zoom"><b>+</b>
        <span>81%</span>
        <svg width="11" height="9" viewBox="0 0 11 9"><rect x=".5" y=".5" width="10" height="8" fill="#fff" stroke="#555"/><path d="M2 3.500V2h2M7 2h2v1.500M9 5.500V7H7M4 7H2V5.500" fill="none" stroke="#555"/></svg>
    </div>
</div>

<footer class="taskbar">
    <div class="weather">
        <svg width="20" height="20" viewBox="0 0 20 20"><circle cx="6" cy="9" r="4.500" fill="#f7a823"/><path d="M4 18.500c-4 0-4-5-.5-5.500 1-4 7-4 8 0 4-.5 5 5.500 1 5.500z" fill="#d5e3f7"/><circle cx="13.500" cy="6" r="5.500" fill="#c42b1c"/><text x="13.500" y="9" text-anchor="middle" fill="#fff" font-size="8">5</text></svg>
        <p>68°F<br>Mostly cloudy</p>
    </div>
    <div class="dock">
        <button aria-label="Start"><svg width="16" height="16" viewBox="0 0 16 16" fill="#5fd0fb"><path d="M0 0h7.500v7.500H0zM8.500 0H16v7.500H8.500zM0 8.500h7.500V16H0zM8.500 8.500H16V16H8.500z"/></svg></button>
        <label class="task-search">
            <svg class="mirror" width="10" height="10"><use href="#i-glass"/></svg>
            <input type="text" placeholder="Search" aria-label="Search Windows">
            <svg width="26" height="18" viewBox="0 0 26 18"><path d="M1 6v6c0 7 24 7 24 0V6z" fill="#54403f"/><ellipse cx="13" cy="6" rx="12" ry="5" fill="#d8cfcf"/><path d="M4 4h4v3H4zM11 2h4v2h-4zM17 4h4v3h-4zM10 7h4v3h-4z" fill="#4a3a3a"/><path d="M5 12v4M10 13v4M16 13v4M21 12v4" stroke="#a29090"/></svg>
        </label>
        <button aria-label="Task view"><svg width="18" height="18" viewBox="0 0 18 18"><path d="M2 5h10v10H2z" fill="#73706c"/><path d="M6 2h10v10H6z" fill="#eee"/></svg></button>
        <button class="run" aria-label="Edge"><svg width="18" height="18" viewBox="0 0 18 18"><circle cx="10" cy="9" r="7.500" fill="#1c87d4"/><path d="M3 8c1-8 14-8 14.500 0 0 4-5 4-6 1 0-4-5-4-8.500-1z" fill="#4fd57a"/><path d="M11 9c2 4 5 3 6 2-2 4-5 5-8 3z" fill="#e8f4fb"/><circle cx="4.500" cy="13" r="4" fill="#8a8a8a"/><circle cx="4.500" cy="12" r="1.500" fill="#ddd"/><path d="M2 15.500c1-3 4-3 5 0z" fill="#ddd"/></svg></button>
        <button aria-label="Copilot"><svg width="17" height="17"><use href="#i-copilot"/></svg></button>
        <button aria-label="Charts"><svg width="18" height="18" viewBox="0 0 18 18"><rect x="1" y="8" width="4" height="8" rx="1" fill="#f5c531"/><rect x="7" y="3" width="4" height="13" rx="1" fill="#1693d6"/><rect x="13" y="9" width="4" height="7" rx="1" fill="#c41c1c"/></svg></button>
        <button class="run" aria-label="File Explorer"><svg width="18" height="18" viewBox="0 0 18 18"><path d="M1 2h6l2 2h8v12H1z" fill="#f3b62b"/><path d="M1 6h16v10H1z" fill="#ffd75e"/><path d="M4 11h10v5H4z" fill="#2a7ac8"/></svg></button>
        <button aria-label="Store"><svg width="18" height="18" viewBox="0 0 18 18"><path d="M6 5V2h6v3" fill="none" stroke="#58c1f0" stroke-width="1.500"/><rect x="2" y="4.500" width="14" height="12" rx="1" fill="#154f86"/><path d="M6 7.500h2.800v2.800H6z" fill="#f25022"/><path d="M9.300 7.500h2.800v2.800H9.300z" fill="#7fba00"/><path d="M6 10.800h2.800v2.800H6z" fill="#00a4ef"/><path d="M9.300 10.800h2.800v2.800H9.300z" fill="#ffb900"/></svg></button>
        <button aria-label="Blocks"><svg width="18" height="18" viewBox="0 0 18 18"><path d="M2 1h14v15H2z" fill="#222"/><path d="M2 1h7v7H2z" fill="#9b1616"/><path d="M10 1h6v5h-6z" fill="#8ed12f"/><path d="M10 7h6v4h-6z" fill="#35a3e0"/><path d="M2 9h7v7H2z" fill="#7b2fa8"/><path d="M10 12h6v4h-6z" fill="#f5c531"/></svg></button>
        <button class="run badge" aria-label="Chat"><svg width="18" height="18" viewBox="0 0 18 18" fill="none" stroke="#1ba04c" stroke-width="1.800"><path d="M1.500 16.500L3 12C0 5 6 1.500 9 2c8 0 9 9 4 12-3 1.500-5 1.200-7 .5z"/><path d="M6 6c0 4 2 6 6 6"/></svg><span>57</span></button>
        <button class="run front" aria-label="Power BI"><svg width="18" height="18" viewBox="0 0 18 18"><rect x="9" y="1" width="6" height="16" rx="1" fill="#d99a12"/><rect x="5.500" y="5" width="6" height="12" rx="1" fill="#f2c230"/><rect x="2" y="9" width="6" height="8" rx="1" fill="#ffe07a"/></svg></button>
        <button class="run" aria-label="Snipping Tool"><svg width="18" height="18" viewBox="0 0 18 18"><rect x="3" y="1" width="12" height="12" rx="2" fill="#f4f4f4"/><rect x="5.500" y="3.500" width="7" height="7" fill="none" stroke="#d33" stroke-dasharray="1 1"/><path d="M15 6l-6 8" stroke="#888"/><circle cx="9" cy="15" r="2" fill="none" stroke="#1e9be8"/><circle cx="15" cy="14" r="2" fill="none" stroke="#1e9be8"/></svg></button>
    </div>
    <div class="tray">
        <svg class="up" width="8" height="5"><use href="#i-down"/></svg>
        <svg width="12" height="12" viewBox="0 0 12 12"><path d="M1 5c0-4 7-6 9-2M10.500.5v3h-3M11 7c0 4-7 6-9 2M1.500 11.500v-3h3" fill="none" stroke="#15263f" stroke-width="1.300"/><circle cx="8.500" cy="8.500" r="2.800" fill="#f7941d"/></svg>
        <svg width="12" height="12" viewBox="0 0 12 12"><path d="M0 2l5-2 5 2v3c0 3-2 5-5 6-3-1-5-3-5-6z" fill="#2a9fe6"/><path d="M8.500 4.500L12 11.500H5z" fill="#ffd335"/><path d="M8.500 7v2.500" stroke="#222"/></svg>
        <span class="lang">ع</span>
        <svg width="11" height="9" viewBox="0 0 11 9" fill="none" stroke="#fff"><path d="M.5 3.500c3-3.500 7-3.500 10 0M2 5c2-2 5-2 7 0M3.800 6.500c1-1 2.400-1 3.400 0"/><circle cx="5.500" cy="8" r=".6"/></svg>
        <svg width="11" height="9" viewBox="0 0 11 9" fill="none" stroke="#fff"><path d="M.5 3h2l2.500-2.500v8L2.500 6h-2zM6.500 3c.8 1 .8 2 0 3M8 1.500c1.500 2 1.500 4 0 6M9.500.5c1.500 2.500 1.500 5.500 0 8"/></svg>
        <svg width="11" height="9" viewBox="0 0 11 9"><rect x="1" y="2.500" width="9" height="5.500" rx="1" fill="#fff"/><path d="M3 0v4M5 0v3" stroke="#fff"/></svg>
        <p class="clock">3:04 AM<br>10/28/2025</p>
        <svg width="10" height="10" viewBox="0 0 10 10"><path d="M1 7c1-1 1-2 1-3 0-4 6-4 6 0 0 1 0 2 1 3zM4 8h2v1.500H4z" fill="#fff"/><path d="M4 3h2L4 5.500h2" stroke="#2e5da3" fill="none" stroke-width=".8"/></svg>
    </div>
</footer>

</body>
</html>
```
FILE: styles.css
```css
*{
    box-sizing: border-box;
    margin: 0;
    padding: 0;
}
body{
    display: flex;
    flex-direction: column;
    height: 100vh;
    overflow: hidden;
    font-family: Roboto, "Noto Sans", sans-serif;
    font-size: 8px;
    line-height: 10px;
    color: #111;
    background: #fff;
}
button, input{
    font: inherit;
    color: inherit;
    border: 0;
    background: none;
}
svg{
    display: block;
    flex: none;
}
a{
    color: inherit;
    text-decoration: none;
}
.sprite{
    position: absolute;
}
.mirror{
    transform: scaleX(-1);
}

/* title bar */
.titlebar{
    display: grid;
    grid-template-columns: 472fr 260fr 268fr;
    align-items: center;
    height: 22px;
    background: #3b3a39;
    color: #fff;
}
.title-left{
    display: flex;
    align-items: center;
    gap: 9px;
    padding-left: 11px;
}
.doc-name{
    margin-left: -3px;
    white-space: nowrap;
}
.caret{
    border: 3px solid transparent;
    border-top-color: #fff;
    border-bottom: 0;
    margin-left: -4px;
}
.title-search{
    display: flex;
    align-items: center;
    gap: 8px;
    height: 16px;
    padding-left: 11px;
    background: #d2d0ce;
    color: #222;
}
.title-search input{
    flex: 1;
    font-size: 9px;
}
.title-search input::placeholder{
    color: #1a5c4c;
}
.title-right{
    display: flex;
    align-items: center;
    justify-content: flex-end;
    padding-right: 4px;
}
.account{
    margin-right: 6px;
}
.win{
    display: flex;
    justify-content: center;
    width: 20px;
    margin-left: 9px;
}
.title-right svg + .win{
    margin-left: 14px;
}

/* menu tabs */
.menu{
    display: flex;
    align-items: center;
    gap: 20px;
    height: 23px;
    padding: 0 4px 0 14px;
    background: #faf9f8;
    font-family: "Open Sans", "Noto Sans", sans-serif;
    font-size: 9px;
}
.menu a{
    line-height: 16px;
    border-bottom: 2px solid transparent;
}
.menu .file{
    margin-right: 4px;
}
.menu .active{
    font-weight: 600;
    border-color: #116149;
}
.share{
    display: flex;
    align-items: center;
    gap: 5px;
    height: 15px;
    margin-left: auto;
    padding: 0 5px 0 4px;
    border-radius: 2px;
    background: #117865;
    color: #fff;
    font-size: 8px;
    font-weight: 600;
}

/* ribbon */
.ribbon{
    display: flex;
    align-items: stretch;
    height: 59px;
    background: #faf9f8;
    border-bottom: 1px solid #d2d0ce;
}
.group{
    display: flex;
    flex-direction: column;
    justify-content: space-between;
    border-right: 1px solid #d8d6d4;
    padding: 4px 4px 0;
}
.group h2{
    font-size: 7px;
    font-weight: 400;
    line-height: 9px;
    text-align: center;
}
.tools{
    display: flex;
    align-items: flex-start;
    justify-content: space-between;
}
.tool{
    white-space: nowrap;
    line-height: 11px;
}
.tool > svg:first-child{
    margin: 0 auto 1px;
}
.tool.off, .clip-list button{
    color: #b3b0ad;
}
.tool .dd{
    display: inline-block;
    width: 5px;
    height: 3px;
    margin: 0 0 0 2px;
    vertical-align: middle;
}
.g-clip{ width: 105px; }
.g-clip .tools{ padding: 0 0 0 4px; }
.g-data{ width: 234px; }
.g-query{ width: 75px; }
.g-insert{ width: 96px; padding: 4px 8px 0; }
.g-calc{ width: 121px; padding: 4px 5px 0; }
.g-sens{ width: 48px; }
.g-share{ width: 38px; }
.g-copilot{ width: 86px; padding: 4px 6px 0; }
.g-sens .tools, .g-share .tools{
    justify-content: center;
}
.clip-list{
    flex: 1;
    margin: -3px 0 0 6px;
}
.clip-list button{
    display: flex;
    align-items: center;
    gap: 3px;
    height: 16px;
    margin-top: -1px;
    white-space: nowrap;
}
.collapse{
    align-self: flex-end;
    margin: 0 2px 4px auto;
    transform: scaleY(-1);
}

/* work area */
.work{
    display: flex;
    flex: 1;
    min-height: 0;
}
.rail{
    width: 27px;
    background: #f3f2f1;
    border-right: 1px solid #e1dfdd;
}
.rail button{
    display: flex;
    flex-direction: column;
    align-items: center;
    justify-content: center;
    width: 100%;
    height: 26px;
}
.rail .active{
    border-left: 2px solid #117865;
}
.rail small{
    font-size: 5px;
    line-height: 4px;
}
.center{
    display: flex;
    flex-direction: column;
    flex: 1;
    min-width: 0;
}
.stage{
    display: flex;
    flex: 1;
    min-height: 0;
}
.canvas{
    flex: 1;
    min-width: 0;
    padding: 7px 10px 2px 8px;
}
.page{
    height: 100%;
    background: #cce5ff;
}

/* report header */
.page-head{
    display: flex;
    align-items: center;
    height: 52px;
}
.page-head h1{
    padding: 0 6px 10px 3px;
    font-family: "Open Sans", "Noto Sans", sans-serif;
    font-size: 16px;
    line-height: 22px;
    font-weight: 400;
    color: #0b0b3c;
    white-space: nowrap;
}
.logo{
    margin-bottom: 8px;
}
.years{
    display: flex;
    gap: 4px;
    margin: 0 16px 5px auto;
    padding: 2px 4px 3px 2px;
    background: #cce6fc;
    box-shadow: 3px 4px 5px rgba(60, 100, 150, .5);
}
.years button{
    width: 90px;
    height: 30px;
    border: 1px solid #b5b9bd;
    border-radius: 15px;
    background: #a0d1ff;
    font-size: 11px;
    font-weight: 700;
    color: #000;
}
.years .on{
    background: #252423;
    color: #fff;
}
.next{
    display: flex;
    align-items: center;
    justify-content: center;
    width: 37px;
    height: 36px;
    margin-bottom: 5px;
    background: #0f62c0;
    box-shadow: 2px 4px 5px rgba(60, 100, 150, .5);
}
.next span{
    display: flex;
    align-items: center;
    justify-content: center;
    width: 28px;
    height: 26px;
    border-radius: 6px;
    background: #8fb9e8;
}

/* cards */
.cards{
    display: grid;
    grid-template-columns: repeat(3, 1fr);
    gap: 4px;
    margin-right: 10px;
    padding: 3px;
    border-top: 1px solid #bcd8f2;
    box-shadow: 3px 4px 5px rgba(60, 100, 150, .5);
}
.card{
    display: flex;
    justify-content: space-between;
    height: 74px;
    padding: 8px 7px 0 6px;
    border: 1px solid #a9a9a9;
    border-radius: 12px;
    background: #fff;
    font-family: "Open Sans", "Noto Sans", sans-serif;
}
.card h3{
    font-size: 8px;
    font-weight: 400;
    line-height: 10px;
    color: #555;
}
.big{
    font-family: Roboto, sans-serif;
    font-size: 28px;
    line-height: 40px;
    color: #000;
}
.growth{
    line-height: 15px;
}
.growth b{
    color: #f00;
}

/* panels */
.row{
    display: grid;
    margin: 0 9px 0 7px;
}
.row-a{
    grid-template-columns: 281fr 227fr 141fr;
    gap: 5px;
    padding-top: 9px;
}
.row-b{
    grid-template-columns: 362fr 291fr;
    gap: 6px;
    padding-top: 6px;
}
.panel{
    display: flex;
    flex-direction: column;
    min-width: 0;
    height: 107px;
    border: 1px solid #444;
    border-radius: 9px;
    background: #fff;
    box-shadow: 3px 4px 6px rgba(60, 100, 150, .55);
    overflow: hidden;
}
.row-b .panel{
    height: 117px;
}
.panel h2{
    height: 17px;
    background: #a0d1ff;
    font-size: 10px;
    font-weight: 500;
    line-height: 17px;
    text-align: center;
    color: #111;
    white-space: nowrap;
}
.chart{
    width: 100%;
    font-family: "Open Sans", "Noto Sans", sans-serif;
    font-size: 6px;
    fill: #484644;
}
.chart .dots{
    fill: none;
    stroke: #ccc;
    stroke-width: 1;
    stroke-dasharray: 1 3;
}
.chart .name{
    font-weight: 600;
    font-size: 5px;
    fill: #252423;
}

/* bar charts */
.bars{
    display: flex;
    flex: 1;
    padding-top: 8px;
    font-family: "Open Sans", "Noto Sans", sans-serif;
    font-size: 6px;
    color: #484644;
}
.vname{
    display: flex;
    align-items: center;
    justify-content: center;
    width: 15px;
    height: 54px;
}
.vname span{
    writing-mode: vertical-rl;
    transform: rotate(180deg);
    font-size: 5px;
    font-weight: 600;
    color: #252423;
    white-space: nowrap;
}
.plot{
    flex: 1;
}
.bar-row{
    display: flex;
    align-items: center;
    height: 13px;
}
.bar-row > span{
    width: 46px;
    padding-right: 8px;
    text-align: right;
    white-space: nowrap;
}
.track{
    display: flex;
    align-items: center;
    flex: 1;
    min-width: 0;
    height: 100%;
}
.track i{
    flex: none;
    height: 8px;
    background: #118dff;
}
.lead .track{
    justify-content: flex-end;
    border-right: 1px dotted #ccc;
    background: linear-gradient(#ddd, #ddd) 15% 0 / 1px 100% no-repeat;
}
.ticks{
    display: flex;
    justify-content: space-between;
    padding-left: 60px;
    line-height: 8px;
}
.ticks span{
    display: flex;
    justify-content: center;
    width: 0;
}
.lead .ticks{
    padding: 6px 0 0 68px;
}
.axis-name{
    padding-left: 42px;
    text-align: center;
    font-size: 5px;
    font-weight: 600;
    color: #252423;
}
.scroll{
    width: 3px;
    height: 61px;
    margin: -4px 6px 0 5px;
    background: #eee;
}
.thumb{
    height: 48px;
    border-radius: 2px;
    background: #b0b0b0;
}
.product .bar-row{
    height: 12px;
}
.product .bar-row > span{
    width: 60px;
    padding-right: 5px;
}
.product .track i{
    background: #a0d1ff;
}
.product .hot i{
    background: #118dff;
}
.product em{
    padding-left: 5px;
    font-style: normal;
    color: #252423;
}
.product .tight{
    padding-left: 1px;
}
.product .ticks{
    padding-top: 6px;
}
.product .axis-name{
    padding-left: 72px;
}
.product .scroll{
    height: 68px;
    margin: -4px 7px 0 18px;
}
.product .thumb{
    height: 22px;
}

/* table */
.table-panel{
    flex-direction: row;
    align-items: flex-start;
    padding: 6px 0 0 6px;
}
table{
    flex: 1;
    table-layout: fixed;
    border-collapse: collapse;
    font-size: 7px;
    line-height: 8px;
}
th, td{
    padding: 2px 2px 0;
    text-align: right;
    vertical-align: top;
    white-space: nowrap;
}
th{
    height: 15px;
    font-weight: 400;
}
.l{
    text-align: left;
}
.c1{ width: 56px; }
.c2{ width: 43px; }
.c3{ width: 34px; }
.c4{ width: 57px; }
.c5{ width: 26px; }
.c6{ width: 47px; }
.c7{ width: 30px; }
.c8{ width: 45px; }
.sort{
    display: block;
    width: 0;
    border: 2px solid transparent;
    border-bottom-color: #222;
    border-top: 0;
    margin-left: 1px;
}
thead tr{
    border-bottom: 1px solid #3a9bff;
}
tbody tr{
    height: 41px;
}
tbody tr + tr{
    height: 37px;
    background: #ebebeb;
}
.flag svg{
    margin-left: 10px;
}
.neg{
    color: #f0202c;
}
tfoot tr{
    border-top: 1px solid #3a9bff;
    font-weight: 700;
}
.table-panel .scroll{
    height: 24px;
    margin: 1px 8px 0 6px;
}
.table-panel .thumb{
    height: 24px;
}

/* filters strip */
.filters{
    display: flex;
    flex-direction: column;
    align-items: center;
    gap: 8px;
    width: 21px;
    padding-top: 8px;
    border-left: 1px solid #d2d0ce;
}
.filters .flip{
    transform: scaleX(-1);
}
.filters span{
    writing-mode: vertical-rl;
    font-weight: 600;
    font-size: 9px;
}

/* page tabs */
.sheets{
    display: flex;
    align-items: center;
    height: 24px;
    padding-left: 5px;
    background: #f3f2f1;
}
.layout{
    display: flex;
    align-items: center;
    justify-content: center;
    width: 16px;
    height: 20px;
    margin-right: 13px;
    border-bottom: 2px solid transparent;
}
.layout.on{
    border-color: #116149;
}
.layout + .step{
    margin-left: -6px;
}
.step{
    width: 14px;
    padding-left: 2px;
}
.sheet{
    position: relative;
    height: 24px;
    padding: 0 12px;
    background: #fff;
    border-bottom: 2px solid #fff;
    margin-right: 1px;
}
.sheet.current{
    font-weight: 500;
    border-bottom-color: #116149;
}
.sheet sup{
    position: absolute;
    top: 1px;
    right: 2px;
}
.add{
    display: flex;
    align-items: center;
    justify-content: center;
    width: 25px;
    height: 24px;
    background: #117865;
}

/* visualizations pane */
.viz, .data{
    background: #f3f2f1;
    border-left: 1px solid #e1dfdd;
}
.viz{
    width: 118px;
}
.data{
    display: flex;
    flex-direction: column;
    width: 141px;
}
.pane-head{
    display: flex;
    align-items: center;
    justify-content: space-between;
    height: 26px;
    padding: 0 5px;
}
.pane-head h2{
    font-family: "Open Sans", "Noto Sans", sans-serif;
    font-size: 10px;
    font-weight: 600;
}
.build{
    padding-left: 5px;
    font-size: 8px;
    font-weight: 500;
    line-height: 9px;
}
.modes{
    display: flex;
    align-items: center;
    gap: 23px;
    padding: 2px 5px 7px;
    border-bottom: 1px solid #979593;
}
.modes button{
    display: flex;
    align-items: center;
    justify-content: center;
    width: 21px;
    height: 21px;
}
.modes .on{
    background: #c8c6c4;
}
.gallery{
    display: grid;
    grid-template-columns: repeat(6, 1fr);
    padding: 5px 4px 3px;
    border-bottom: 1px solid #d2d0ce;
}
.gallery button{
    display: flex;
    align-items: center;
    justify-content: center;
    height: 18px;
}
.gallery svg{
    width: 12px;
    height: 12px;
}
.gallery .b{
    fill: #8cc4f5;
    stroke: #2b7cd3;
    stroke-width: .7;
}
.gallery .k{
    fill: #e6e6e6;
    stroke: #555;
    stroke-width: .8;
}
.gallery .ax{
    fill: none;
    stroke: #222;
    stroke-width: 1;
}
.gallery .bl{
    fill: none;
    stroke: #2b7cd3;
    stroke-width: .9;
}
.gallery .txt{
    font-size: 11px;
    font-weight: 700;
    color: #2b7cd3;
}
.wells{
    padding: 5px 4px 0 2px;
}
.wells h4{
    padding-left: 6px;
    font-size: 8px;
    font-weight: 400;
    line-height: 12px;
}
.well{
    height: 18px;
    margin-top: 3px;
    padding-left: 6px;
    border: 1px dotted #bbb;
    background: #fff;
    line-height: 16px;
    white-space: nowrap;
}
.wells .drill{
    margin: 6px 0 2px;
    font-weight: 500;
}
.switch{
    display: flex;
    align-items: center;
    justify-content: space-between;
    height: 17px;
    padding: 0 10px 0 6px;
}
.switch input{
    position: absolute;
    opacity: 0;
}
.switch span{
    display: flex;
    align-items: center;
    justify-content: space-between;
    width: 21px;
    height: 11px;
    padding: 0 2px;
    border: 1px solid #777;
    border-radius: 6px;
    background: #fff;
    font-size: 6px;
}
.switch span::before{
    content: "";
    width: 6px;
    height: 6px;
    border-radius: 3px;
    background: #444;
}
.switch span::after{
    content: "Off";
}
.switch input:checked + span{
    flex-direction: row-reverse;
    background: #117865;
    border-color: #117865;
    color: #fff;
}
.switch input:checked + span::before{
    background: #fff;
}
.switch input:checked + span::after{
    content: "On";
}

/* data pane */
.find{
    display: flex;
    align-items: center;
    gap: 5px;
    height: 16px;
    margin: 4px 3px 3px 2px;
    padding-left: 7px;
    border: 1px solid #c8c6c4;
    border-radius: 3px;
    background: #fff;
}
.find input{
    width: 90px;
    font-size: 9px;
}
input::placeholder{
    color: #605e5c;
    opacity: 1;
}
.tree{
    position: relative;
    display: flex;
    flex: 1;
    flex-direction: column;
    min-height: 0;
    padding-bottom: 4px;
}
.tree label, .tree div:not(.tree-bar){
    display: flex;
    flex: 1;
    align-items: center;
    gap: 4px;
    white-space: nowrap;
}
.tree input{
    appearance: none;
    width: 8px;
    height: 8px;
    border: 1px solid #8a8886;
    border-radius: 1px;
    background: #fff;
}
.tree svg{
    width: 9px;
    height: 10px;
}
.tree .chev{
    width: 8px;
    height: 5px;
}
.tree .m{ padding-left: 38px; }
.tree .f{ padding-left: 17px; gap: 2px; }
.tree .t{ padding-left: 7px; gap: 2px; }
.tree .c{ padding-left: 28px; gap: 16px; }
.tree-bar{
    position: absolute;
    top: 46px;
    right: 3px;
    width: 5px;
    height: 126px;
    background: #8a8886;
}

/* status bar */
.status{
    display: flex;
    align-items: center;
    justify-content: space-between;
    height: 15px;
    padding: 0 11px 0 3px;
    background: #f3f2f1;
    border-top: 1px solid #e1dfdd;
    border-bottom: 1px solid #111;
}
.zoom{
    display: flex;
    align-items: center;
    gap: 4px;
}
.zoom span{
    margin: 0 8px 0 5px;
}
.zoom input{
    appearance: none;
    width: 66px;
    height: 1px;
    background: #555;
}
.zoom input::-webkit-slider-thumb{
    appearance: none;
    width: 2px;
    height: 7px;
    background: #222;
}

/* taskbar */
.taskbar{
    display: flex;
    align-items: center;
    height: 31px;
    background: linear-gradient(90deg, #04428f, #0c4898 30%, #2a5ba4 60%, #2f60a8);
    color: #fff;
}
.weather{
    display: flex;
    align-items: center;
    gap: 2px;
    width: 269px;
    padding-left: 11px;
}
.weather p{
    line-height: 11px;
}
.dock{
    display: flex;
    align-items: center;
}
.dock button{
    position: relative;
    display: flex;
    align-items: center;
    justify-content: center;
    width: 29px;
    height: 27px;
}
.dock .run::after{
    content: "";
    position: absolute;
    bottom: 0;
    width: 5px;
    height: 2px;
    border-radius: 1px;
    background: #b9c9e0;
}
.dock .front{
    border-radius: 3px;
    background: rgba(255, 255, 255, .1);
}
.dock .front::after{
    width: 10px;
    background: #5fd0fb;
}
.badge span{
    position: absolute;
    top: 1px;
    right: 2px;
    width: 14px;
    height: 12px;
    border-radius: 6px;
    background: #5cc4ea;
    color: #111;
    font-size: 8px;
    font-weight: 500;
    line-height: 12px;
}
.task-search{
    display: flex;
    align-items: center;
    gap: 6px;
    width: 142px;
    height: 21px;
    margin: 0 0 0 3px;
    padding: 0 5px 0 8px;
    border-radius: 11px;
    background: #f0f4fa;
    color: #111;
}
.task-search input{
    flex: 1;
    width: 20px;
    font-size: 9px;
}
.tray{
    display: flex;
    align-items: center;
    gap: 5px;
    margin-left: auto;
    padding-right: 13px;
}
.tray .up{
    margin-right: 8px;
    transform: scaleY(-1);
}
.lang{
    margin: 0 12px 0 10px;
    font-family: "DejaVu Sans", sans-serif;
}
.clock{
    margin-left: 5px;
    line-height: 11px;
    text-align: right;
}
```
